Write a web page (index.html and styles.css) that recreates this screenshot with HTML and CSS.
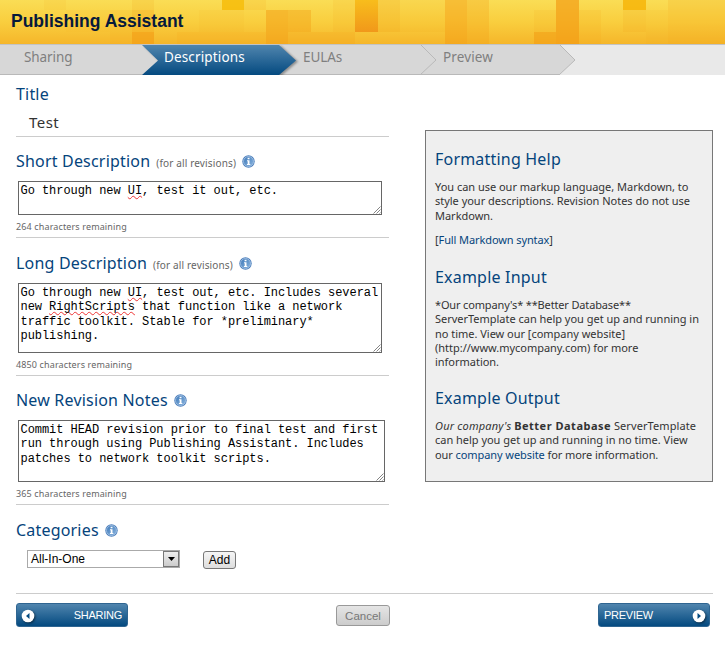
FILE: index.html
```html
<!DOCTYPE html>
<html lang="en">
<head>
<meta charset="utf-8">
<title>Publishing Assistant</title>
<link rel="stylesheet" href="styles.css">
</head>
<body>
<svg class="defs" width="0" height="0" aria-hidden="true">
  <defs>
    <linearGradient id="ball" x1="0" y1="0" x2="1" y2="1"><stop offset="0" stop-color="#3d78b8"/><stop offset="1" stop-color="#8ab4de"/></linearGradient>
    <linearGradient id="blue" x1="0" y1="0" x2="0" y2="1"><stop offset="0" stop-color="#5085ae"/><stop offset="1" stop-color="#044a80"/></linearGradient>
    <symbol id="info" viewBox="0 0 13 13">
      <circle cx="6.5" cy="6.5" r="6.2" fill="#4f81bd"/>
      <circle cx="6.5" cy="6.5" r="5" fill="url(#ball)" stroke="#a9c6e6" stroke-width=".8"/>
      <path d="M5.6 2.7h1.9v1.6H5.6zM5 5.2h2.5v3.9h.8v1H4.9v-1h.8V6.2H5z" fill="#fff"/>
    </symbol>
    <symbol id="grip" viewBox="0 0 8 8"><path d="M.5 7.5l7-7M3.5 7.5l4-4M6.5 7.5l1-1" stroke="#777" stroke-width=".9" fill="none"/></symbol>
  </defs>
</svg>
<header class="banner">
  <svg class="mosaic" width="725" height="44" aria-hidden="true">
    <g fill="#f39a12">
      <rect x="44" width="22" height="10" opacity=".08"/>
      <rect x="66" y="10" width="44" height="22" opacity=".04"/>
      <rect x="110" y="10" width="22" height="34" opacity=".1"/>
      <rect x="132" width="22" height="10" opacity=".14"/>
      <rect x="132" y="10" width="22" height="22" opacity=".28"/>
      <rect x="132" y="32" width="22" height="12" opacity=".6"/>
      <rect x="199" y="10" width="45" height="22" opacity=".06"/>
      <rect x="177" y="32" width="89" height="12" opacity=".12"/>
      <rect x="222" width="22" height="10" fill="#f5b800" opacity=".75"/>
      <rect x="244" width="22" height="10" opacity=".12"/>
      <rect x="266" y="10" width="22" height="34" opacity=".48"/>
      <rect x="288" y="10" width="23" height="22" opacity=".38"/>
      <rect x="288" y="32" width="67" height="12" opacity=".2"/>
      <rect x="333" width="22" height="32" opacity=".1"/>
      <linearGradient id="tile" x1="0" y1="0" x2="0" y2="1"><stop offset="0" stop-color="#f8bd1c"/><stop offset="1" stop-color="#f1981a"/></linearGradient>
      <rect x="355" width="23" height="32" fill="url(#tile)"/>
      <rect x="378" width="22" height="32" opacity=".22"/>
      <rect x="400" width="45" height="32" opacity=".08"/>
      <rect x="445" width="22" height="44" opacity=".45"/>
      <rect x="467" width="22" height="44" opacity=".27"/>
      <rect x="534" y="10" width="22" height="22" opacity=".1"/>
      <rect x="534" y="32" width="22" height="12" opacity=".55"/>
      <rect x="556" width="23" height="44" opacity=".66"/>
      <rect x="579" y="10" width="22" height="34" opacity=".12"/>
      <rect x="623" width="23" height="10" fill="#f5b000" opacity=".75"/>
      <rect x="623" y="10" width="23" height="22" opacity=".14"/>
      <rect x="646" y="10" width="22" height="34" opacity=".06"/>
      <rect x="668" width="57" height="44" opacity=".16"/>
    </g>
  </svg>
  <h1>Publishing Assistant</h1>
</header>
<nav class="steps">
  <svg class="arrows" width="725" height="31" aria-hidden="true">
    <rect width="725" height="31" fill="#e9e9e9"/>
    <path d="M0 0H559L575 16 559 31H0z" fill="#d7d7d7"/>
    <path d="M0 30.5H559M420 0L436 16 420 31M559 0L575 16 559 31" fill="none" stroke="#b9b9b9"/>
    <path class="glow" d="M142 1H279L296 16.500 279 31H142L158 16.500z" fill="url(#blue)"/>
    <path d="M0 .5H725" stroke="#c3c3c3"/>
  </svg>
  <a class="step s1">Sharing</a><a class="step s2">Descriptions</a><a class="step s3">EULAs</a><a class="step s4">Preview</a>
</nav>
<main class="page">
  <form class="form">
    <section class="title">
      <h2>Title</h2>
      <p class="name">Test</p>
    </section>
    <section class="short">
      <h2><span>Short Description</span> <small>(for all revisions)</small><svg class="info"><use href="#info"/></svg></h2>
      <div class="area">Go through new <u>UI</u>, test it out, etc.<svg class="grip"><use href="#grip"/></svg></div>
      <p class="left">264 characters remaining</p>
    </section>
    <section class="long">
      <h2><span>Long Description</span> <small>(for all revisions)</small><svg class="info"><use href="#info"/></svg></h2>
      <div class="area">Go through new <u>UI</u>, test out, etc. Includes several<br>new <u>RightScripts</u> that function like a network<br>traffic toolkit. Stable for *preliminary*<br>publishing.<svg class="grip"><use href="#grip"/></svg></div>
      <p class="left">4850 characters remaining</p>
    </section>
    <section class="notes">
      <h2><span>New Revision Notes</span><svg class="info"><use href="#info"/></svg></h2>
      <div class="area">Commit HEAD revision prior to final test and first<br>run through using Publishing Assistant. Includes<br>patches to network toolkit scripts.<svg class="grip"><use href="#grip"/></svg></div>
      <p class="left">365 characters remaining</p>
    </section>
    <section class="cats">
      <h2><span>Categories</span><svg class="info"><use href="#info"/></svg></h2>
      <div class="pick">
        <div class="select"><span>All-In-One</span><i><svg width="7" height="4"><path d="M0 0h7L3.500 4z"/></svg></i></div>
        <button type="button" class="add">Add</button>
      </div>
    </section>
  </form>
  <aside class="help">
    <h2 class="h-help">Formatting Help</h2>
    <p class="intro">You can use our markup language, Markdown, to<br>style your descriptions. Revision Notes do not use<br>Markdown.</p>
    <p class="syntax">[<a>Full Markdown syntax</a>]</p>
    <h2>Example Input</h2>
    <p class="input"><span class="stars">*Our company's* **Better Database**</span><br>ServerTemplate can help you get up and running in<br>no time. View our [company website]<br>(http://www.mycompany.com) for more<br>information.</p>
    <h2 class="h-out">Example Output</h2>
    <p class="output"><em>Our company's</em> <b>Better Database</b> <span class="tpl">ServerTemplate</span><br>can help you get up and running in no time. View<br><span class="last">our <a>company website</a> for more information.</span></p>
  </aside>
</main>
<footer class="actions">
  <button class="go back"><svg width="14" height="14"><circle cx="7" cy="7" r="6.300" fill="#fff"/><path d="M8.500 4v6L5 7z" fill="#044a80"/></svg><span>SHARING</span></button>
  <button class="cancel">Cancel</button>
  <button class="go next"><span>PREVIEW</span><svg width="14" height="14"><circle cx="7" cy="7" r="6.300" fill="#fff"/><path d="M5.500 4v6L9 7z" fill="#044a80"/></svg></button>
</footer>
</body>
</html>
```
FILE: styles.css
```css
* { box-sizing: border-box; }
body { margin: 0; background: #fff; color: #333; font-family: "Noto Sans", sans-serif; font-size: 11px; line-height: 14.3px; white-space: nowrap; overflow: hidden; }
h1, h2, p { margin: 0; font-weight: normal; }
.defs { position: absolute; }
.banner { position: relative; height: 44px; background: linear-gradient(#fadd55, #f9ce3e 50%, #f5b62a); }
.mosaic, .arrows { position: absolute; left: 0; top: 0; }
h1 { position: relative; padding: 11px 0 0 11px; font: bold 17.500px/20px "Liberation Sans", sans-serif; color: #06193c; }
.steps { position: relative; display: flex; height: 31px; padding-left: 24px; }
.glow { filter: drop-shadow(2px 1px 1px rgba(0,0,0,.35)); }
.step { position: relative; font-size: 13.500px; line-height: 27px; color: #7f7f7f; letter-spacing: -.1px; }
.s1 { width: 140px; }
.s2 { width: 139px; color: #fff; letter-spacing: .14px; }
.s3 { width: 140px; }
.s4 { letter-spacing: .14px; }
.page { display: flex; justify-content: space-between; height: 518px; padding: 0 12px 0 16px; }
.form { width: 373px; }
section { border-bottom: 1px solid #ccc; }
h2 { display: flex; align-items: center; height: 20px; font-size: 16px; line-height: 20px; color: #05447c; letter-spacing: .19px; }
.title { height: 62px; padding-top: 9px; }
.name { padding: 8px 0 0 13px; font-size: 15px; line-height: 20px; letter-spacing: .45px; }
.short { height: 101px; padding-top: 14px; }
.long { height: 138px; padding-top: 15px; }
.notes { height: 129px; padding-top: 14px; }
.cats { padding-top: 15px; border: 0; }
small { margin: 4px 0 0 6px; font-size: 10px; color: #666; letter-spacing: .15px; }
.info { width: 13px; height: 13px; margin-left: 6px; flex: none; }
.area { position: relative; width: 364px; margin: 10px 0 0 2px; padding: 2px 1.500px; border: 1px solid #666; background: #fff; color: #000; font: 12px/14.300px "Liberation Mono", monospace; letter-spacing: -.05px; }
.short .area { height: 34px; }
.long .area { height: 70px; }
.notes .area { width: 367px; height: 62px; }
u { text-decoration: underline wavy #e33 1px; text-underline-offset: 1px; text-decoration-skip-ink: none; }
.grip { position: absolute; right: 0; bottom: 0; width: 8px; height: 8px; }
.left { padding-top: 5px; font-size: 9px; color: #666; letter-spacing: .13px; }
.pick { display: flex; padding: 9px 0 0 11px; font: 12px/17px "Liberation Sans", sans-serif; color: #000; }
.select { display: flex; justify-content: space-between; width: 153px; height: 18px; margin-top: 1px; padding-left: 3px; border: 1px solid #aaa; }
.select i { display: flex; align-items: center; justify-content: center; width: 16px; height: 16px; border: 1px solid #777; background: linear-gradient(#eee, #ccc); }
button { padding: 0; font: 12px/16px "Liberation Sans", sans-serif; }
.add { width: 33px; height: 18px; margin: 2px 0 0 23px; border: 1px solid #777; border-radius: 3px; background: linear-gradient(#f5f5f5, #ddd); color: #000; }
.help { width: 288px; height: 352px; margin-top: 55px; padding: 18px 0 0 9px; border: 1px solid #777; background: #efefef; }
.help p { margin-top: 11px; letter-spacing: -.02px; }
.help .syntax { margin-top: 10px; letter-spacing: -.1px; }
.help h2 { margin-top: 20px; letter-spacing: .2px; }
.help .h-help { margin-top: 0; }
.help .h-out { margin-top: 18.500px; }
.help .stars { letter-spacing: -.15px; }
.help em { letter-spacing: .2px; }
.help b { letter-spacing: .5px; }
.help .tpl { letter-spacing: .08px; }
.help .last { letter-spacing: -.08px; }
.help .output { margin-top: 11px; }
.help a { color: #05447c; }
.actions { display: flex; justify-content: space-between; height: 40px; margin: 0 12px 0 16px; padding: 9px 3px 0 0; border-top: 1px solid #ccc; }
.go { display: flex; align-items: center; justify-content: space-between; width: 112px; height: 24px; padding: 0 5px; border: 1px solid #2f6591; border-radius: 3px; background: linear-gradient(#5085ae, #044a80); color: #fff; font-size: 11px; letter-spacing: -.25px; }
.go svg { margin-top: 1px; filter: drop-shadow(1px 1px 1px rgba(0,0,0,.5)); }
.back { padding-left: 4px; }
.next { padding-right: 3px; }
.cancel { width: 54px; height: 21px; margin-top: 2px; border: 1px solid #999; border-radius: 3px; background: linear-gradient(#e5e5e5, #ccc); color: #777; font-size: 11.500px; }
```
